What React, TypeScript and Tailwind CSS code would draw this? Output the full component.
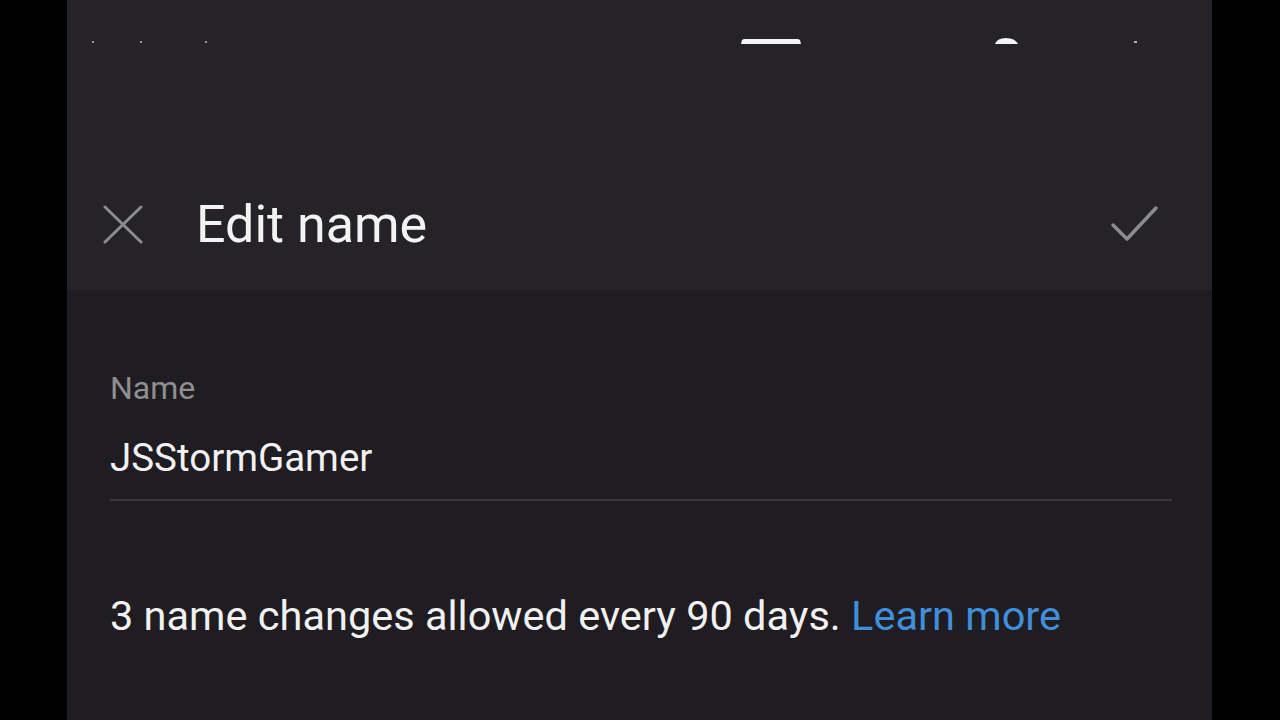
import React from "react";

const font = { fontFamily: "Roboto, 'Noto Sans', sans-serif" };

function TopStrip() {
  // bottoms of the clipped row above the header
  return (
    <svg width="1145" height="44" className="block">
      <rect x="25" y="41" width="2" height="2" fill="#9a9a9a" />
      <rect x="73" y="41" width="2" height="2" fill="#9a9a9a" />
      <rect x="138" y="41" width="2" height="2" fill="#9a9a9a" />
      <path d="M674 44 L675 40 Q676 39 678 39 L730 39 Q732 39 733 40 L734 44 Z" fill="#f4f4f6" />
      <path d="M928 44 Q930 38 939 38 Q948 38 951 44 Z" fill="#f4f4f6" />
      <rect x="1067" y="41" width="3" height="2" fill="#b0b0b0" />
    </svg>
  );
}

export default function App() {
  return (
    <div className="w-[1280px] h-[720px] bg-black pl-[67px] overflow-hidden" style={font}>
      <div className="w-[1145px] h-[720px] bg-[#1f1d21] flex flex-col">
        <div className="h-[290px] bg-[#252327] flex flex-col">
          <TopStrip />
          <div className="mt-[151px] h-[60px] flex items-center">
            <svg width="40" height="40" viewBox="0 0 40 40" className="ml-[36px]">
              <path d="M2 2 L38 37 M38 2 L2 37" stroke="#8c8b8d" strokeWidth="3" strokeLinecap="round" />
            </svg>
            <h1 className="ml-[53px] text-[52px] leading-none text-[#f3f3f3]">Edit name</h1>
            <svg width="50" height="40" viewBox="0 0 50 40" className="ml-auto mr-[52px]">
              <path d="M3 20 L17 34 L46 3" stroke="#8c8b8d" strokeWidth="3.5" fill="none" strokeLinecap="round" strokeLinejoin="round" />
            </svg>
          </div>
        </div>

        <div className="pl-[43px] pr-[40px] pt-[82px]">
          <div className="text-[32px] leading-none text-[#8f8e90]">Name</div>
          <div className="mt-[35px] pb-[21px] border-b-2 border-[#38363a] text-[38.5px] leading-none text-[#f1f1f1]">
            JSStormGamer
          </div>
          <p className="mt-[94px] text-[41.5px] leading-none text-[#f1f1f1]">
            3 name changes allowed every 90 days.{" "}
            <span className="text-[#3f8fdc]">Learn more</span>
          </p>
        </div>
      </div>
    </div>
  );
}
